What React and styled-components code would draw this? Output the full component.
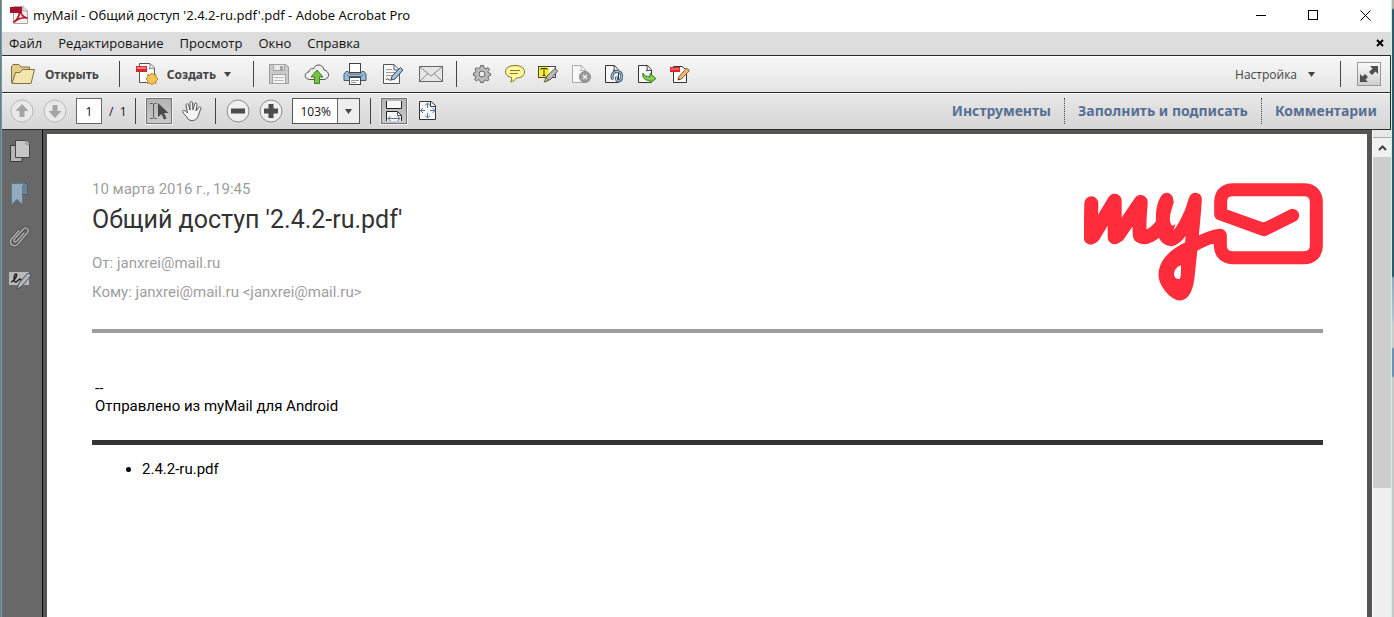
import React from "react";
import styled, { createGlobalStyle, css } from "styled-components";

// ------------ Variables -------------------
const ui_font = '"Open Sans", "Noto Sans", sans-serif';
const bold_font = '"Noto Sans", "Open Sans", sans-serif';
const doc_font = 'Roboto, "Liberation Sans", sans-serif';
const color_line = "#2b2b2b";
const color_dark = "#555553";
const color_blue = "#566f93";
const color_red = "#ff2d3b";
const color_grey_text = "#9e9e9e";

// --------------- Styles -------------------
const GlobalStyle = createGlobalStyle`
  * { box-sizing: border-box; }
  html, body, #root { height: 100%; margin: 0; }
  body { overflow: hidden; }
  button, input, select { font: inherit; color: inherit; padding: 0; margin: 0; }
`;

const Desktop = styled.div`
  height: 100%;
  padding: 0 2px 0 1px;
  background:
    linear-gradient(#5d808a, #5d808a) 0 0 / 1px 100% no-repeat,
    linear-gradient(#b5b5ae 0, #b5b5ae 8px, #2c5a68 10px, #2c5a68 276px, #8fa9bd 278px, #b4c4cf 320px, #c9cdcb 322px, #c9cdcb 347px, #6f8fb0 349px, #6f8fb0 376px, #c5c9c7 378px);
`;

const Window = styled.div`
  display: flex;
  flex-direction: column;
  height: 100%;
  background: #fff;
  font-family: ${ui_font};
  font-size: 13px;
  color: #111;
  border-left: 1px solid #7d9aa2;
  border-right: 1px solid #d5eaf0;
`;

const TitleBar = styled.header`
  display: flex;
  align-items: center;
  height: 32px;
  flex: none;
  padding: 0 0 2px 7px;
`;

const WindowTitle = styled.h1`
  flex: 1;
  margin: 0 0 0 4px;
  font-family: ${bold_font};
  font-size: 13px;
  font-weight: 400;
  line-height: 18px;
`;

const PlainButton = styled.button`
  display: flex;
  align-items: center;
  justify-content: center;
  flex: none;
  border: 0;
  background: none;
  & svg { display: block; }
`;

const CaptionButton = styled(PlainButton)`
  width: 52px;
  height: 28px;
`;

const MenuBar = styled.nav`
  display: flex;
  align-items: center;
  gap: 16px;
  flex: none;
  height: 23px;
  padding: 0 7px 1px;
  background: #ddd;
`;

const MenuItem = styled(PlainButton)`
  line-height: 18px;
`;

const CloseDoc = styled(PlainButton)`
  margin-left: auto;
`;

const Bar = styled.div`
  display: flex;
  align-items: center;
  flex: none;
  height: 37px;
  border-top: 1px solid ${color_line};
  border-right: 1px solid ${color_line};
  box-shadow: inset 0 1px #fff;
  background: ${(p) => (p.$lower ? "linear-gradient(#e8e8e8, #d6d6d6)" : "linear-gradient(#f7f7f7, #e4e4e4)")};
`;

const Group = styled.div`
  display: flex;
  align-items: center;
  gap: ${(p) => p.$gap || 0}px;
  padding: 0 ${(p) => p.$right || 0}px 0 ${(p) => p.$left || 0}px;
`;

const Separator = styled.span`
  flex: none;
  width: 1px;
  height: 26px;
  background: #444;
`;

const RightGroup = styled.div`
  display: flex;
  align-items: center;
  margin-left: auto;
  padding-right: 9px;
  & ${Separator} { margin: 0 16px 0 25px; }
`;

const TextButton = styled(PlainButton)`
  gap: ${(p) => p.$gap || 8}px;
  font-family: ${(p) => (p.$bold ? bold_font : ui_font)};
  font-size: 12px;
  font-weight: ${(p) => (p.$bold ? 700 : 400)};
  color: #444;
`;

const ToolButton = styled(PlainButton)`
  width: ${(p) => p.$width || 24}px;
  height: 26px;
  ${(p) =>
    p.$pressed &&
    css`
      border: 1px solid #747474;
      background: linear-gradient(#b4b4b4, #cacaca);
      box-shadow: 0 0 0 1px #f4f4f4;
    `}
`;

const ExpandButton = styled(ToolButton)`
  height: 24px;
  border: 1px solid #999;
  background: linear-gradient(#fafafa, #cfcfcf);
`;

const PageInput = styled.input`
  width: 26px;
  height: 26px;
  border: 1px solid #666;
  background: #fff;
  text-align: center;
  font-size: 12px;
`;

const PageCount = styled.span`
  font-size: 12px;
  white-space: pre;
`;

const ZoomBox = styled.div`
  position: relative;
  width: 68px;
  height: 26px;
  & select {
    width: 100%;
    height: 100%;
    appearance: none;
    border: 1px solid #555;
    border-radius: 0;
    padding-left: 8px;
    background: linear-gradient(90deg, #fff 44px, #666 44px, #666 45px, #eee 45px);
    font-size: 12px;
  }
  & svg {
    position: absolute;
    right: 8px;
    top: 11px;
    pointer-events: none;
  }
`;

const PaneTabs = styled.div`
  display: flex;
  align-items: center;
  margin-left: auto;
  height: 26px;
`;

const PaneTab = styled.button`
  height: 26px;
  padding: 0 13px 2px;
  border: 0;
  border-left: 1px dotted #444;
  background: none;
  font-family: ${bold_font};
  font-size: 14px;
  font-weight: 700;
  color: ${color_blue};
  &:first-child { border-left: 0; }
`;

const Body = styled.div`
  display: flex;
  flex: 1;
  min-height: 0;
  border-top: 1px solid ${color_line};
  background: ${color_dark};
`;

const Sidebar = styled.aside`
  display: flex;
  flex-direction: column;
  align-items: center;
  gap: 19px;
  flex: none;
  width: 41px;
  padding: 9px 4px 0 0;
  border-right: 1px solid #0c0c0c;
  background: #686868;
`;

const SideButton = styled(PlainButton)`
  width: 24px;
  height: 24px;
`;

const Page = styled.main`
  flex: 1;
  margin: 4px 5px 0 4px;
  padding: 47px 44px 0 45px;
  background: #fff;
  font-family: ${doc_font};
  font-size: 15px;
  line-height: 20px;
  color: #000;
`;

const MailHead = styled.section`
  display: flex;
  justify-content: space-between;
  align-items: flex-start;
  height: 152px;
  padding-top: 2px;
  border-bottom: 4px solid #9e9e9e;
`;

const Muted = styled.p`
  margin: 0 0 9px;
  line-height: 20px;
  color: ${color_grey_text};
`;

const DateLine = styled(Muted)`
  margin: -4px 0 0;
`;

const Subject = styled.h2`
  margin: 4px 0 16px;
  font-size: 25px;
  font-weight: 400;
  line-height: 34px;
  color: #333;
`;

const Signature = styled.p`
  margin: 0;
  padding: 46px 3px 25px;
  border-bottom: 5px solid #333;
  line-height: 18px;
`;

const Files = styled.ul`
  margin: 14px 0 0;
  padding-left: 50px;
`;

const Scrollbar = styled.div`
  display: flex;
  flex-direction: column;
  flex: none;
  width: 19px;
  border-left: 1px solid #fff;
  background: #f0f0f0;
`;

const ScrollSplit = styled.div`
  height: 8px;
  border-bottom: 1px solid #aaa;
  background: #e8e8e8;
`;

const ScrollUp = styled(PlainButton)`
  height: 19px;
`;

const ScrollThumb = styled.div`
  flex: 0 0 68%;
  background: #cdcdcd;
`;
// -------- end of Styles -------------------

// --------------- Icons --------------------
const Svg = ({ w, h, children }) => (
  <svg width={w} height={h} viewBox={`0 0 ${w} ${h}`} fill="none" aria-hidden="true">
    {children}
  </svg>
);

const Caret = () => (
  <Svg w={7} h={5}>
    <path d="M0 0H7L3.500 5Z" fill="#444" />
  </Svg>
);

const AcrobatIcon = () => (
  <Svg w={20} h={20}>
    <path d="M4.500 1.500H14L18.500 6V18.500H4.500Z" fill="#f6eeee" stroke="#b0a0a0" />
    <path d="M14 1.500V6H18.500" stroke="#b0a0a0" />
    <rect x="1" y="2" width="12" height="6" fill="#a3122b" />
    <path d="M5 17C9 14 11 10 10.500 5C12 10 14 12 18 13C14 12 9 14 5 17Z" stroke="#b3142c" strokeWidth="1.600" strokeLinejoin="round" />
  </Svg>
);

const FolderIcon = () => (
  <Svg w={26} h={22}>
    <path d="M1.500 19V3.500L3 1.500H9L11 4H19.500V7" fill="#e2cd8b" stroke="#7f6f42" />
    <path d="M2 20.500L5.500 9.500H10L12.500 6.500H24.500L21 20.500Z" fill="#f4e5ae" stroke="#7f6f42" strokeLinejoin="round" />
    <path d="M1.500 3.500V19L2.500 20.500" stroke="#7f6f42" />
  </Svg>
);

const CreateIcon = () => (
  <Svg w={24} h={24}>
    <path d="M4.500 1.500H15L19.500 6V20.500H4.500Z" fill="#fdfdfd" stroke="#555" />
    <path d="M14.500 1.500C16 4 15 6 14 7C16 6 18 6 19.500 7" fill="#fff" stroke="#6b7c96" />
    <rect x="1" y="4" width="11" height="6" fill="#d9252c" />
    <rect x="2" y="5" width="9" height="2" fill="#f08084" />
    <path d="M17 11L18.500 13L21 12.500L21 15L23 17L21 19L21 21.500L18.500 21L17 23L15 21L12.500 21.500L13 19L11 17L13 15L12.500 12.500L15 13Z" fill="#f5c452" stroke="#b98a2a" />
  </Svg>
);

const SaveIcon = () => (
  <Svg w={22} h={22}>
    <path d="M1.500 1.500H18L20.500 4V20.500H1.500Z" fill="#c9c9c9" stroke="#9b9b9b" />
    <rect x="5.500" y="1.500" width="11" height="6" fill="#e9e9e9" stroke="#a3a3a3" />
    <rect x="12" y="3" width="3" height="4" fill="#a2a2a2" />
    <rect x="4.500" y="11.500" width="13" height="9" fill="#f3f3f3" stroke="#a3a3a3" />
    <path d="M6 14.500H16M6 17.500H16" stroke="#bbb" />
  </Svg>
);

const CloudIcon = () => (
  <Svg w={26} h={22}>
    <path d="M6 16.500C-1 16 .5 9 5 9C5 6 8 5 9.500 6C11 .5 19 .5 20 7C26 8 26 16 20 16.500Z" fill="#f1f1f1" stroke="#555" />
    <path d="M13 7L19 14H15.500V20.500H10.500V14H7Z" fill="#79c143" stroke="#3b8222" strokeLinejoin="round" />
  </Svg>
);

const PrintIcon = () => (
  <Svg w={24} h={24}>
    <rect x="6.500" y="1.500" width="11" height="9" fill="#fff" stroke="#444" />
    <path d="M3 9.500H5L7 12H17L19 9.500H21L23 12V18.500H1V12Z" fill="#9cbad4" stroke="#41586e" />
    <path d="M4 12.500L6 14.500H18L20 12.500" stroke="#3f5870" />
    <rect x="6.500" y="15.500" width="11" height="7" fill="#fff" stroke="#444" />
    <path d="M8 18.500H16M8 20.500H13" stroke="#999" />
  </Svg>
);

const SignIcon = () => (
  <Svg w={22} h={22}>
    <path d="M1.500 1.500H12L17.500 7V20.500H1.500Z" fill="#f8f8f8" stroke="#555" />
    <path d="M12 1.500V7H17.500" stroke="#555" />
    <path d="M4 6.500H10M4 9.500H13M4 12.500H10" stroke="#999" />
    <path d="M4 17C6 14 7 18 9 17" stroke="#333" />
    <path d="M9 17L10 13L18.500 4.500L21 7L13 16Z" fill="#a8c0d6" stroke="#384b60" strokeLinejoin="round" />
  </Svg>
);

const MailIcon = () => (
  <Svg w={26} h={18}>
    <rect x="1.500" y="1.500" width="23" height="15" fill="#e6e6e6" stroke="#666" />
    <path d="M2 2L13 11L24 2M2 16L10 8.500M24 16L16 8.500" stroke="#888" />
  </Svg>
);

const GearIcon = () => (
  <Svg w={20} h={20}>
    <path d="M8.500 1.500H11.500L12 4L14 5L16 3.500L17.500 5.500L16 7.500L16.500 9L18.500 9.500V11.500L16.500 12L16 14L17 15.500L15.500 17L13.500 16L12 16.500L11.500 18.500H8.500L8 16.500L6 15.500L4.500 17L2.500 15.500L4 13L3.500 12L1.500 11.500V9L3.500 8.500L4 7L3 5L4.500 3.500L6.500 4.500L8 4Z" fill="#bdbdbd" stroke="#666" strokeLinejoin="round" />
    <circle cx="10" cy="10" r="3" fill="#e8e8e8" stroke="#666" />
  </Svg>
);

const CommentIcon = () => (
  <Svg w={22} h={20}>
    <path d="M11 1.500C17 1.500 20.500 4 20.500 8C20.500 12 17 14 12.500 14C11 16 9 17.500 6.500 18C7.500 17 8 15.500 7.500 13.500C3.500 12.500 1.500 10.500 1.500 8C1.500 4 5 1.500 11 1.500Z" fill="#fdf7a0" stroke="#7d7420" />
    <path d="M6 6.500H16M6 9.500H14" stroke="#8a7c2c" />
  </Svg>
);

const HighlightIcon = () => (
  <Svg w={22} h={20}>
    <rect x="1.500" y="2.500" width="17" height="11" fill="#fff" stroke="#444" />
    <rect x="2" y="3" width="10" height="10" fill="#fff22d" />
    <path d="M4 6V4.500H10V6M7 4.500V11M5.500 11.500H8.500" stroke="#333" />
    <path d="M8 18L10 12L18 4.500L20.500 7L14 15Z" fill="#bcbcbc" stroke="#555" strokeLinejoin="round" />
    <path d="M7 18L9 14L12 16Z" fill="#f1e33c" stroke="#666" />
  </Svg>
);

const Sheet = ({ stroke }) => (
  <>
    <path d="M1.500 1.500H10.500L14.500 6V18.500H1.500Z" fill="#f8f8f8" stroke={stroke} />
    <path d="M9.500 1.500C11 4 10 6 9.500 7C11 6 13 6 14.500 7" fill="#fff" stroke={stroke} />
  </>
);

const DeletePageIcon = () => (
  <Svg w={20} h={20}>
    <Sheet stroke="#aaa" />
    <circle cx="14" cy="13" r="5.500" fill="#999" stroke="#8a8a8a" />
    <path d="M12 11L16 15M16 11L12 15" stroke="#eee" strokeWidth="1.500" />
  </Svg>
);

const AttachPageIcon = () => (
  <Svg w={20} h={20}>
    <Sheet stroke="#333" />
    <path d="M9 15.500C6.500 12 9 7.500 13 7.500C17 7.500 18.500 11 17.500 14C17 17.500 12.500 18 12.500 15V12.500" stroke="#4b6680" strokeWidth="3" />
    <path d="M9 15C6.500 12 9 7.500 13 7.500C17 7.500 18.500 11 17.500 14C17 17.500 12.500 18 12.500 15V13" stroke="#c3d4e2" />
  </Svg>
);

const ExportPageIcon = () => (
  <Svg w={20} h={20}>
    <Sheet stroke="#333" />
    <path d="M6 9C7 12 9 12.500 13 12.500V9.500L19 14.500L13 19V16.500C8 16.500 5 14 6 9Z" fill="#86c957" stroke="#357a1f" strokeLinejoin="round" />
  </Svg>
);

const EditPdfIcon = () => (
  <Svg w={22} h={20}>
    <path d="M4.500 2.500H13L17.500 6V18.500H4.500Z" fill="#fff" stroke="#333" />
    <rect x="1" y="3" width="10" height="5" fill="#e0242a" />
    <path d="M2 5H10" stroke="#f59a9c" />
    <path d="M9 16L10 12.500L17.500 4L20.500 6.500L12.500 15Z" fill="#f2b77a" stroke="#8a5b2e" strokeLinejoin="round" />
    <path d="M9 16L9.500 14L11 15.500Z" fill="#222" />
  </Svg>
);

const ExpandIcon = () => (
  <Svg w={20} h={20}>
    <path d="M11 2H19V10L16.500 7.500L13 11L10 8L13.500 4.500Z" fill="#505050" />
    <path d="M9 18H1V10L3.500 12.500L6 10L9 13L6.500 15.500Z" fill="#505050" />
  </Svg>
);

const ArrowIcon = ({ down }) => (
  <Svg w={24} h={24}>
    <circle cx="12" cy="12" r="11" fill="#e9e9e9" stroke="#b8b8b8" />
    <path d={down ? "M12 19L5.500 12H9.500V6H14.500V12H18.500Z" : "M12 5L18.500 12H14.500V18H9.500V12H5.500Z"} fill="#a5a5a5" />
  </Svg>
);

const ZoomIcon = ({ plus }) => (
  <Svg w={24} h={24}>
    <circle cx="12" cy="12" r="11" fill="#efefef" stroke="#8c8c8c" />
    <path d={plus ? "M5 12H19M12 5V19" : "M5 12H19"} stroke="#4d4d4d" strokeWidth="5" />
  </Svg>
);

const SelectIcon = () => (
  <Svg w={22} h={20}>
    <path d="M2 2.500H4.500L5.500 3.500L6.500 2.500H8.500M2 17.500H4.500L5.500 16.500L6.500 17.500H8.500M5.500 3V17" stroke="#555" />
    <path d="M10 2V16L13.500 13L16 18.500L18.500 17.500L16 12H20.500Z" fill="#4a4a4a" />
  </Svg>
);

const HandIcon = () => (
  <Svg w={22} h={22}>
    <path d="M7 19C6 16 2 14 1.500 11.500C2 9.500 5 10.500 6.500 13L5 5.500C5 3.500 7 3 7.500 5L9 10V3C9 1 11.500 1 11.500 3L12 10L13.500 4C14 2.500 16 2.500 16 4.500L15 11L17.500 7.500C18.500 6 20.500 7 20 8.500C18 12 18 16 15.500 19C13 21 9 21 7 19Z" fill="#f5f5f5" stroke="#555" strokeLinejoin="round" />
  </Svg>
);

const FitWidthIcon = () => (
  <Svg w={20} h={22}>
    <path d="M2.500 1V8.500H17.500V1" fill="#f6f6f6" stroke="#222" />
    <path d="M2.500 21V11.500H13.500L17.500 15.500V21" fill="#f6f6f6" stroke="#222" />
    <path d="M13.500 12V15.500H17" stroke="#555" />
    <path d="M4 18.500H16M6.500 16L4 18.500L6.500 21M13.500 16L16 18.500L13.500 21" stroke="#54709a" />
  </Svg>
);

const FitPageIcon = () => (
  <Svg w={20} h={22}>
    <path d="M1.500 1.500H13L17.500 5.500V19.500H1.500Z" fill="#f9f9f9" stroke="#333" />
    <path d="M12.500 2V6.500H17" stroke="#333" />
    <path d="M9.500 3V8M9.500 13V18M2.500 10.500H7M12 10.500H17" stroke="#54709a" />
    <path d="M7 5.500L9.500 3L12 5.500M7 15.500L9.500 18L12 15.500M5 8L2.500 10.500L5 13M14.500 8L17 10.500L14.500 13" stroke="#54709a" />
  </Svg>
);

const PagesIcon = () => (
  <Svg w={24} h={24}>
    <path d="M2.500 6.500H14V22.500H2.500Z" fill="#b5b5b5" stroke="#3b3b3b" />
    <path d="M7.500 1.500H18L21.500 5V18.500H7.500Z" fill="#c6c6c6" stroke="#444" />
    <path d="M18 1.500V5H21.500" fill="#eee" stroke="#777" />
  </Svg>
);

const BookmarkIcon = () => (
  <Svg w={24} h={24}>
    <path d="M14 1.500H19.500V12.500H14Z" fill="#688598" stroke="#48606f" />
    <path d="M3.500 1.500H17C15 2 14.500 4 14.500 6V22.500L9 17.500L3.500 22.500Z" fill="#93acbd" stroke="#5d7888" />
  </Svg>
);

const ClipIcon = () => (
  <Svg w={24} h={24}>
    <path d="M16 8L9 16C7 18 5 16 6.500 14L15 4.500C18 1.500 22 4 19.500 7.500L10 19C6 23 0 19 3.500 14L11 5.500" stroke="#4c4c4c" strokeWidth="3" strokeLinecap="round" />
    <path d="M16 8L9 16C7 18 5 16 6.500 14L15 4.500C18 1.500 22 4 19.500 7.500L10 19C6 23 0 19 3.500 14L11 5.500" stroke="#b0b0b0" strokeWidth="1.500" strokeLinecap="round" />
  </Svg>
);

const SignaturesIcon = () => (
  <Svg w={24} h={24}>
    <rect x="1" y="4" width="20" height="13" fill="#b9b9b9" />
    <path d="M3 14C7 13 10 6 8 6C6 6 5 15 8 14L12 11L14 13" stroke="#222" strokeWidth="1.500" />
    <path d="M9 21L11 15L20 5L23 6.500L22 9L13 19Z" fill="#a9b4bb" stroke="#4a4f53" strokeLinejoin="round" />
  </Svg>
);

const MyMailLogo = () => (
  <svg width="239" height="118" viewBox="42 37 717 354" fill="none" role="img" aria-label="myMail">
    <g stroke={color_red} strokeWidth="39" strokeLinecap="round" strokeLinejoin="round">
      <path strokeWidth="42" d="M64 98L62 201L70 196L134 90L134 200L144 194L212 94C211 125 205 165 210 196C225 206 255 192 278 160" />
      <path d="M290 86C284 95 277 112 277 140C278 180 282 206 303 207C330 204 365 130 376 86C374 130 364 225 354 320C352 345 342 369 331 370C314 370 285 336 285 312C285 282 310 256 340 240C370 225 412 197 451 194V228C453 248 466 261 486 261H702C726 261 739 246 739 226V94C739 71 726 57 702 57H490C464 57 452 71 452 94V130L582 177L668 134" />
    </g>
    <path
      d="M380 220L345 230L290 270L275 320L331 385L360 340ZM333 284C318 288 312 302 312 312C314 322 322 327 330 324C333 315 333 300 333 284Z"
      fill={color_red}
      fillRule="evenodd"
    />
    <path d="M272 90H312C308 110 298 130 300 150C302 165 308 168 316 160L305 200H270Z" fill={color_red} />
  </svg>
);
// -------- end of Icons --------------------

const fileTools = [
  ["Сохранить", SaveIcon],
  ["Загрузить в облако", CloudIcon],
  ["Печать", PrintIcon],
  ["Подписать", SignIcon],
  ["Отправить", MailIcon],
];

const quickTools = [
  ["Параметры", GearIcon],
  ["Добавить заметку", CommentIcon],
  ["Выделить текст", HighlightIcon],
  ["Удалить страницы", DeletePageIcon],
  ["Прикрепить файл", AttachPageIcon],
  ["Экспорт", ExportPageIcon],
  ["Редактировать PDF", EditPdfIcon],
];

const sideTools = [
  ["Миниатюры страниц", PagesIcon],
  ["Закладки", BookmarkIcon],
  ["Вложения", ClipIcon],
  ["Подписи", SignaturesIcon],
];

const Caption = () => (
  <TitleBar>
    <AcrobatIcon />
    <WindowTitle>myMail - Общий доступ '2.4.2-ru.pdf'.pdf - Adobe Acrobat Pro</WindowTitle>
    <CaptionButton aria-label="Свернуть">
      <Svg w={11} h={11}><path d="M0 5.500H10" stroke="#000" /></Svg>
    </CaptionButton>
    <CaptionButton aria-label="Развернуть">
      <Svg w={11} h={11}><rect x=".5" y=".5" width="9" height="9" stroke="#000" /></Svg>
    </CaptionButton>
    <CaptionButton aria-label="Закрыть">
      <Svg w={11} h={11}><path d="M.5 .5L10.500 10.500M10.500 .5L.5 10.500" stroke="#000" /></Svg>
    </CaptionButton>
  </TitleBar>
);

const Menu = () => (
  <MenuBar>
    {["Файл", "Редактирование", "Просмотр", "Окно", "Справка"].map((name) => (
      <MenuItem key={name}>{name}</MenuItem>
    ))}
    <CloseDoc aria-label="Закрыть документ">
      <Svg w={8} h={8}><path d="M1 1L7 7M7 1L1 7" stroke="#000" strokeWidth="2" /></Svg>
    </CloseDoc>
  </MenuBar>
);

const MainToolbar = () => (
  <Bar>
    <Group $left={8} $right={20}>
      <TextButton $bold $gap={9}><FolderIcon />Открыть</TextButton>
    </Group>
    <Separator />
    <Group $left={15} $right={22}>
      <TextButton $bold><CreateIcon />Создать<Caret /></TextButton>
    </Group>
    <Separator />
    <Group $left={12} $right={12} $gap={12}>
      {fileTools.map(([label, Icon]) => (
        <ToolButton key={label} $width={26} aria-label={label}><Icon /></ToolButton>
      ))}
    </Group>
    <Separator />
    <Group $left={13} $gap={9}>
      {quickTools.map(([label, Icon]) => (
        <ToolButton key={label} aria-label={label}><Icon /></ToolButton>
      ))}
    </Group>
    <RightGroup>
      <TextButton $gap={11}>Настройка<Caret /></TextButton>
      <Separator />
      <ExpandButton aria-label="Режим чтения"><ExpandIcon /></ExpandButton>
    </RightGroup>
  </Bar>
);

const ViewToolbar = () => (
  <Bar $lower>
    <Group $left={8} $right={7} $gap={9}>
      <ToolButton aria-label="Предыдущая страница"><ArrowIcon /></ToolButton>
      <ToolButton aria-label="Следующая страница"><ArrowIcon down /></ToolButton>
      <PageInput aria-label="Страница" defaultValue="1" />
    </Group>
    <Group $right={8}>
      <PageCount>/  1</PageCount>
    </Group>
    <Separator />
    <Group $left={10} $right={10} $gap={7}>
      <ToolButton $width={26} $pressed aria-label="Выделение"><SelectIcon /></ToolButton>
      <ToolButton $width={26} aria-label="Рука"><HandIcon /></ToolButton>
    </Group>
    <Separator />
    <Group $left={10} $right={10} $gap={9}>
      <ToolButton aria-label="Уменьшить"><ZoomIcon /></ToolButton>
      <ToolButton aria-label="Увеличить"><ZoomIcon plus /></ToolButton>
      <ZoomBox>
        <select aria-label="Масштаб" defaultValue="103%">
          <option>103%</option>
        </select>
        <Caret />
      </ZoomBox>
    </Group>
    <Separator />
    <Group $left={10} $gap={8}>
      <ToolButton $width={26} $pressed aria-label="По ширине"><FitWidthIcon /></ToolButton>
      <ToolButton $width={26} aria-label="Страница целиком"><FitPageIcon /></ToolButton>
    </Group>
    <PaneTabs>
      <PaneTab>Инструменты</PaneTab>
      <PaneTab>Заполнить и подписать</PaneTab>
      <PaneTab>Комментарии</PaneTab>
    </PaneTabs>
  </Bar>
);

const Mail = () => (
  <Page>
    <MailHead>
      <div>
        <DateLine>10 марта 2016 г., 19:45</DateLine>
        <Subject>Общий доступ '2.4.2-ru.pdf'</Subject>
        <Muted>От: janxrei@mail.ru</Muted>
        <Muted>Кому: janxrei@mail.ru &lt;janxrei@mail.ru&gt;</Muted>
      </div>
      <MyMailLogo />
    </MailHead>
    <Signature>
      --
      <br />
      Отправлено из myMail для Android
    </Signature>
    <Files>
      <li>2.4.2-ru.pdf</li>
    </Files>
  </Page>
);

const App = () => (
  <Desktop>
    <GlobalStyle />
    <Window>
      <Caption />
      <Menu />
      <MainToolbar />
      <ViewToolbar />
      <Body>
        <Sidebar>
          {sideTools.map(([label, Icon]) => (
            <SideButton key={label} aria-label={label}><Icon /></SideButton>
          ))}
        </Sidebar>
        <Mail />
        <Scrollbar>
          <ScrollSplit />
          <ScrollUp aria-label="Вверх">
            <Svg w={9} h={6}><path d="M1 5L4.500 1.500L8 5" stroke="#444" strokeWidth="2" /></Svg>
          </ScrollUp>
          <ScrollThumb />
        </Scrollbar>
      </Body>
    </Window>
  </Desktop>
);

export default App;
